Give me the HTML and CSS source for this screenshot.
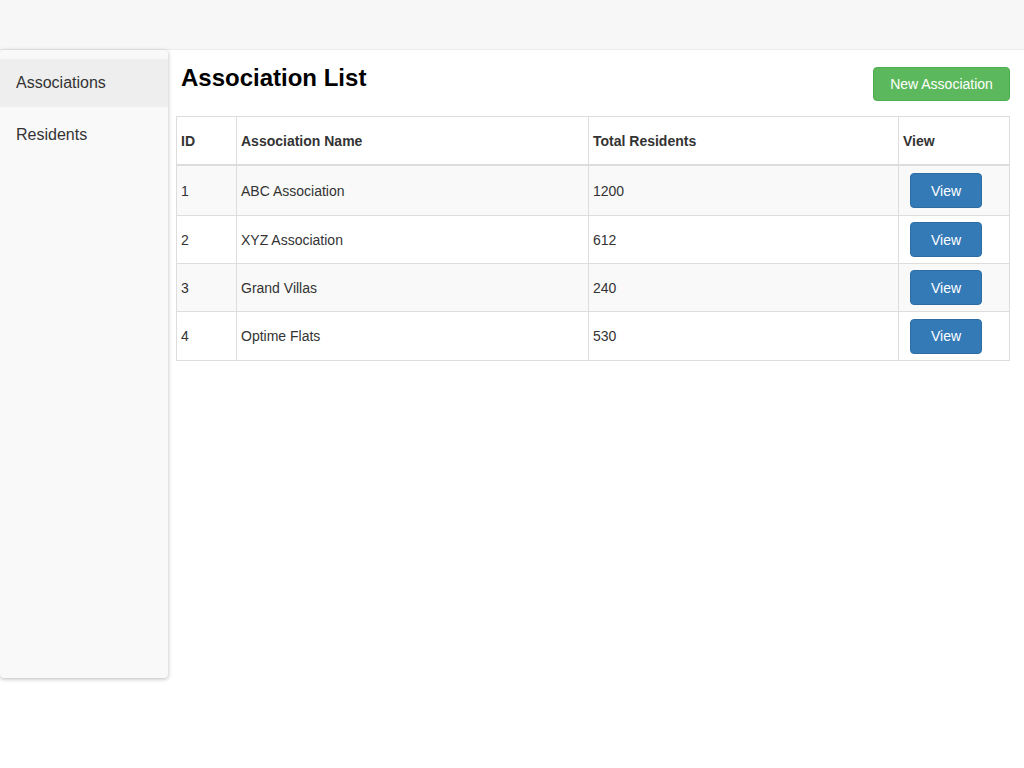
FILE: index.html
```html
<!DOCTYPE html>
<html>
<head>
<meta charset="utf-8">
<link rel="stylesheet" href="styles.css">
</head>
<body>
<div class="topbar"></div>
<div class="layout">
  <nav class="sidebar">
    <a class="nav-item active">Associations</a>
    <a class="nav-item">Residents</a>
  </nav>
  <main class="main">
    <div class="page-head">
      <h1 class="title">Association List</h1>
      <button class="btn btn-success">New Association</button>
    </div>
    <table class="table">
      <colgroup>
        <col class="c-id"><col class="c-name"><col class="c-total"><col class="c-view">
      </colgroup>
      <thead>
        <tr><th>ID</th><th>Association Name</th><th>Total Residents</th><th>View</th></tr>
      </thead>
      <tbody>
        <tr class="tall"><td>1</td><td>ABC Association</td><td>1200</td><td><button class="btn btn-primary btn-view">View</button></td></tr>
        <tr><td>2</td><td>XYZ Association</td><td>612</td><td><button class="btn btn-primary btn-view">View</button></td></tr>
        <tr><td>3</td><td>Grand Villas</td><td>240</td><td><button class="btn btn-primary btn-view">View</button></td></tr>
        <tr class="last"><td>4</td><td>Optime Flats</td><td>530</td><td><button class="btn btn-primary btn-view">View</button></td></tr>
      </tbody>
    </table>
  </main>
</div>
</body>
</html>
```
FILE: styles.css
```css
html, body {
  margin: 0;
  padding: 0;
  background: #fff;
  font-family: "Liberation Sans", Arial, sans-serif;
  font-size: 14px;
  line-height: 20px;
  color: #333;
}
body {
  min-height: 100vh;
}
.topbar {
  height: 49px;
  background: #f7f7f7;
  border-bottom: 1px solid #ececec;
}
.layout {
  display: flex;
  align-items: flex-start;
}
.sidebar {
  width: 168px;
  height: 619px;
  padding-top: 9px;
  background: #f9f9f9;
  border-radius: 4px;
  box-shadow: 0 1px 4px rgba(0, 0, 0, 0.28);
  display: flex;
  flex-direction: column;
  gap: 4px;
  flex-shrink: 0;
}
.nav-item {
  display: block;
  height: 48px;
  line-height: 48px;
  padding-left: 16px;
  font-size: 16px;
  color: #333;
}
.nav-item.active {
  background: #eeeeee;
}
.main {
  flex: 1;
  padding: 0 16px 0 8px;
}
.page-head {
  display: flex;
  justify-content: space-between;
  align-items: flex-start;
  height: 66px;
}
.title {
  margin: 15px 0 0 5px;
  font-size: 24px;
  line-height: 26px;
  font-weight: bold;
  color: #000;
}
.btn {
  display: inline-block;
  font-family: "Liberation Sans", Arial, sans-serif;
  font-size: 14px;
  line-height: 20px;
  height: 34px;
  padding: 6px 12px;
  border: 1px solid transparent;
  border-radius: 4px;
  color: #fff;
  box-sizing: border-box;
}
.btn-success {
  margin-top: 17px;
  width: 137px;
  background: #5cb85c;
  border-color: #4cae4c;
}
.btn-primary {
  background: #337ab7;
  border-color: #2e6da4;
}
.btn-view {
  width: 72px;
  height: 35px;
  margin-left: 7px;
}
.table {
  width: 833px;
  border-collapse: collapse;
  table-layout: fixed;
}
.c-id { width: 60px; }
.c-name { width: 352px; }
.c-total { width: 310px; }
.c-view { width: 111px; }
.table th, .table td {
  border: 1px solid #ddd;
  text-align: left;
  vertical-align: middle;
  padding: 0 4px;
}
.table th {
  height: 47px;
  font-weight: bold;
  border-bottom: 2px solid #ddd;
}
.table td {
  height: 47px;
}
.table tr.tall td {
  height: 49px;
}
.table tr.last td {
  height: 48px;
}
.table tbody tr:nth-child(odd) {
  background: #f9f9f9;
}
```
